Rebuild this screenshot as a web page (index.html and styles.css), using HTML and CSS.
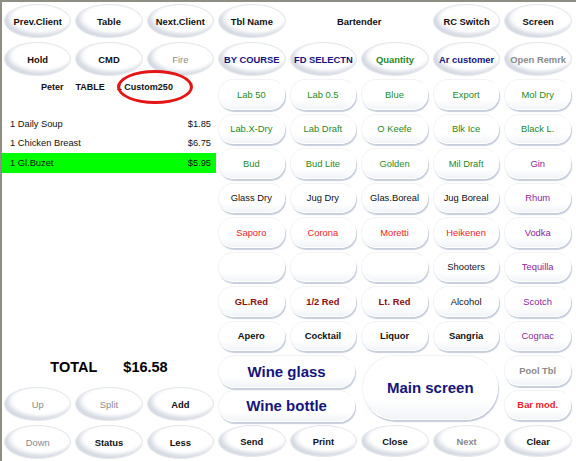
FILE: index.html
```html
<!DOCTYPE html>
<html lang="en">
<head>
  <meta charset="UTF-8" />
  <title>Bar Order</title>
  <link rel="stylesheet" href="styles.css">
</head>
<body>
  <div class="screen">
    <div class="left">
      <div class="keys">
        <button class="key oval">Prev.Client</button>
        <button class="key oval">Table</button>
        <button class="key oval">Next.Client</button>
        <button class="key oval">Hold</button>
        <button class="key oval">CMD</button>
        <button class="key oval off thin">Fire</button>
      </div>

      <div class="info">
        <span>Peter</span>
        <span>TABLE</span>
        <span>1 Custom250</span>
        <i class="mark"></i>
      </div>

      <ul class="order">
        <li><span>1 Daily Soup</span><span>$1.85</span></li>
        <li><span>1 Chicken Breast</span><span>$6.75</span></li>
        <li class="sel"><span>1 Gl.Buzet</span><span>$5.95</span></li>
      </ul>

      <div class="total"><span>TOTAL</span><span>$16.58</span></div>

      <div class="keys">
        <button class="key oval off thin">Up</button>
        <button class="key oval off thin">Split</button>
        <button class="key oval">Add</button>
        <button class="key oval off thin">Down</button>
        <button class="key oval">Status</button>
        <button class="key oval">Less</button>
      </div>
    </div>

    <div class="pad">
      <button class="key oval">Tbl Name</button>
      <div class="label">Bartender</div>
      <button class="key oval">RC Switch</button>
      <button class="key oval">Screen</button>

      <button class="key oval navy">BY COURSE</button>
      <button class="key oval navy">FD SELECTN</button>
      <button class="key oval green">Quantity</button>
      <button class="key oval navy">Ar customer</button>
      <button class="key oval off">Open Remrk</button>

      <button class="key pill green thin">Lab 50</button>
      <button class="key pill green thin">Lab 0.5</button>
      <button class="key pill green thin">Blue</button>
      <button class="key pill green thin">Export</button>
      <button class="key pill green thin">Mol Dry</button>

      <button class="key pill green thin">Lab.X-Dry</button>
      <button class="key pill green thin">Lab Draft</button>
      <button class="key pill green thin">O Keefe</button>
      <button class="key pill green thin">Blk Ice</button>
      <button class="key pill green thin">Black L.</button>

      <button class="key pill green thin">Bud</button>
      <button class="key pill green thin">Bud Lite</button>
      <button class="key pill green thin">Golden</button>
      <button class="key pill green thin">Mil Draft</button>
      <button class="key pill purple thin">Gin</button>

      <button class="key pill thin">Glass Dry</button>
      <button class="key pill thin">Jug Dry</button>
      <button class="key pill thin">Glas.Boreal</button>
      <button class="key pill thin">Jug Boreal</button>
      <button class="key pill purple thin">Rhum</button>

      <button class="key pill red thin">Saporo</button>
      <button class="key pill red thin">Corona</button>
      <button class="key pill red thin">Moretti</button>
      <button class="key pill red thin">Heikenen</button>
      <button class="key pill purple thin">Vodka</button>

      <button class="key pill"></button>
      <button class="key pill"></button>
      <button class="key pill"></button>
      <button class="key pill thin">Shooters</button>
      <button class="key pill purple thin">Tequilla</button>

      <button class="key pill wine">GL.Red</button>
      <button class="key pill wine">1/2 Red</button>
      <button class="key pill wine">Lt. Red</button>
      <button class="key pill thin">Alcohol</button>
      <button class="key pill purple thin">Scotch</button>

      <button class="key pill">Apero</button>
      <button class="key pill">Cocktail</button>
      <button class="key pill">Liquor</button>
      <button class="key pill">Sangria</button>
      <button class="key pill purple thin">Cognac</button>

      <button class="key pill navy big wide r11">Wine glass</button>
      <button class="key pill navy big main">Main screen</button>
      <button class="key pill off">Pool Tbl</button>
      <button class="key pill navy big wide r12">Wine bottle</button>
      <button class="key pill red">Bar mod.</button>

      <button class="key oval">Send</button>
      <button class="key oval">Print</button>
      <button class="key oval">Close</button>
      <button class="key oval off">Next</button>
      <button class="key oval">Clear</button>
    </div>
  </div>
</body>
</html>
```

FILE: styles.css
```css
body { margin: 0; background: #fff; font-family: "Liberation Sans", Arial, sans-serif; }
.screen {
  width: 574px;
  height: 459px;
  border-left: 2px solid #8e8e84;
  border-top: 2px solid #8e8e84;
  display: flex;
  background: #fff;
}

.left { width: 214px; display: flex; flex-direction: column; }
.pad {
  flex: 1;
  display: grid;
  grid-template-columns: repeat(5, 1fr);
  grid-template-rows: 38px 38px repeat(10, 34.5px) 36px;
  padding-right: 2px;
}

.keys { display: grid; grid-template-columns: repeat(3, 1fr); grid-template-rows: 38px 38px; }

/* buttons */
.key {
  font: bold 9.4px "Liberation Sans", Arial, sans-serif;
  color: #111;
  background: #fff;
  padding: 0;
  cursor: pointer;
  white-space: nowrap;
}
.key.thin { font-weight: normal; }
.oval {
  margin: 2px 2px 2px 2px;
  border: 1px solid #e3e6ec;
  border-radius: 50%;
  background: radial-gradient(ellipse at 58% 38%, #fff 52%, #f2f4f8 64%, #e0e4eb 71%);
  box-shadow: inset 3px -3px 4px #d5d9e1;
}
.pill {
  margin: 1px 3px 3px 2px;
  border: 1px solid #f1f3f6;
  border-right-color: #fff;
  border-bottom-color: #fff;
  border-radius: 15px;
  background: linear-gradient(#fff 68%, #f1f4f8);
  box-shadow: 1px 2px 1px #c6cedb;
}

.off { color: #8a8a8a; }
.navy { color: #15157c; }
.green { color: #1f8a24; }
.red { color: #ee1c2c; }
.purple { color: #8c1f98; }
.wine { color: #8b1111; }
.big { font-size: 15px; }

.label { grid-column: 2 / 4; display: flex; align-items: center; justify-content: center; font-size: 9.4px; font-weight: bold; color: #111; }
.wide { grid-column: 1 / 3; margin: 1px 4px 1px 2px; border-radius: 17px; }
.r11 { grid-row: 11; }
.r12 { grid-row: 12; }
.main { grid-column: 3 / 5; grid-row: 11 / 13; margin: 1px 4px 3px 3px; border-radius: 34px; }

/* left panel */
.info {
  position: relative;
  height: 37px;
  line-height: 18px;
  padding-left: 39px;
  display: flex;
  gap: 12px;
  font-size: 9px;
  font-weight: bold;
  color: #111;
}
.info .mark {
  position: absolute;
  left: 115px;
  top: -8px;
  width: 70px;
  height: 28px;
  border: 3px solid #e51515;
  border-radius: 50%;
}

.order { list-style: none; margin: 0; padding: 0; flex: 1; }
.order li {
  height: 19px;
  line-height: 19px;
  display: flex;
  justify-content: space-between;
  padding: 0 5px 0 8px;
  font-size: 9.3px;
  color: #111;
}
.order li.sel { background: #00ff00; height: 20px; line-height: 20px; }

.total {
  height: 36px;
  line-height: 36px;
  display: flex;
  justify-content: center;
  gap: 26px;
  font-size: 14.5px;
  font-weight: bold;
  color: #000;
}
```
